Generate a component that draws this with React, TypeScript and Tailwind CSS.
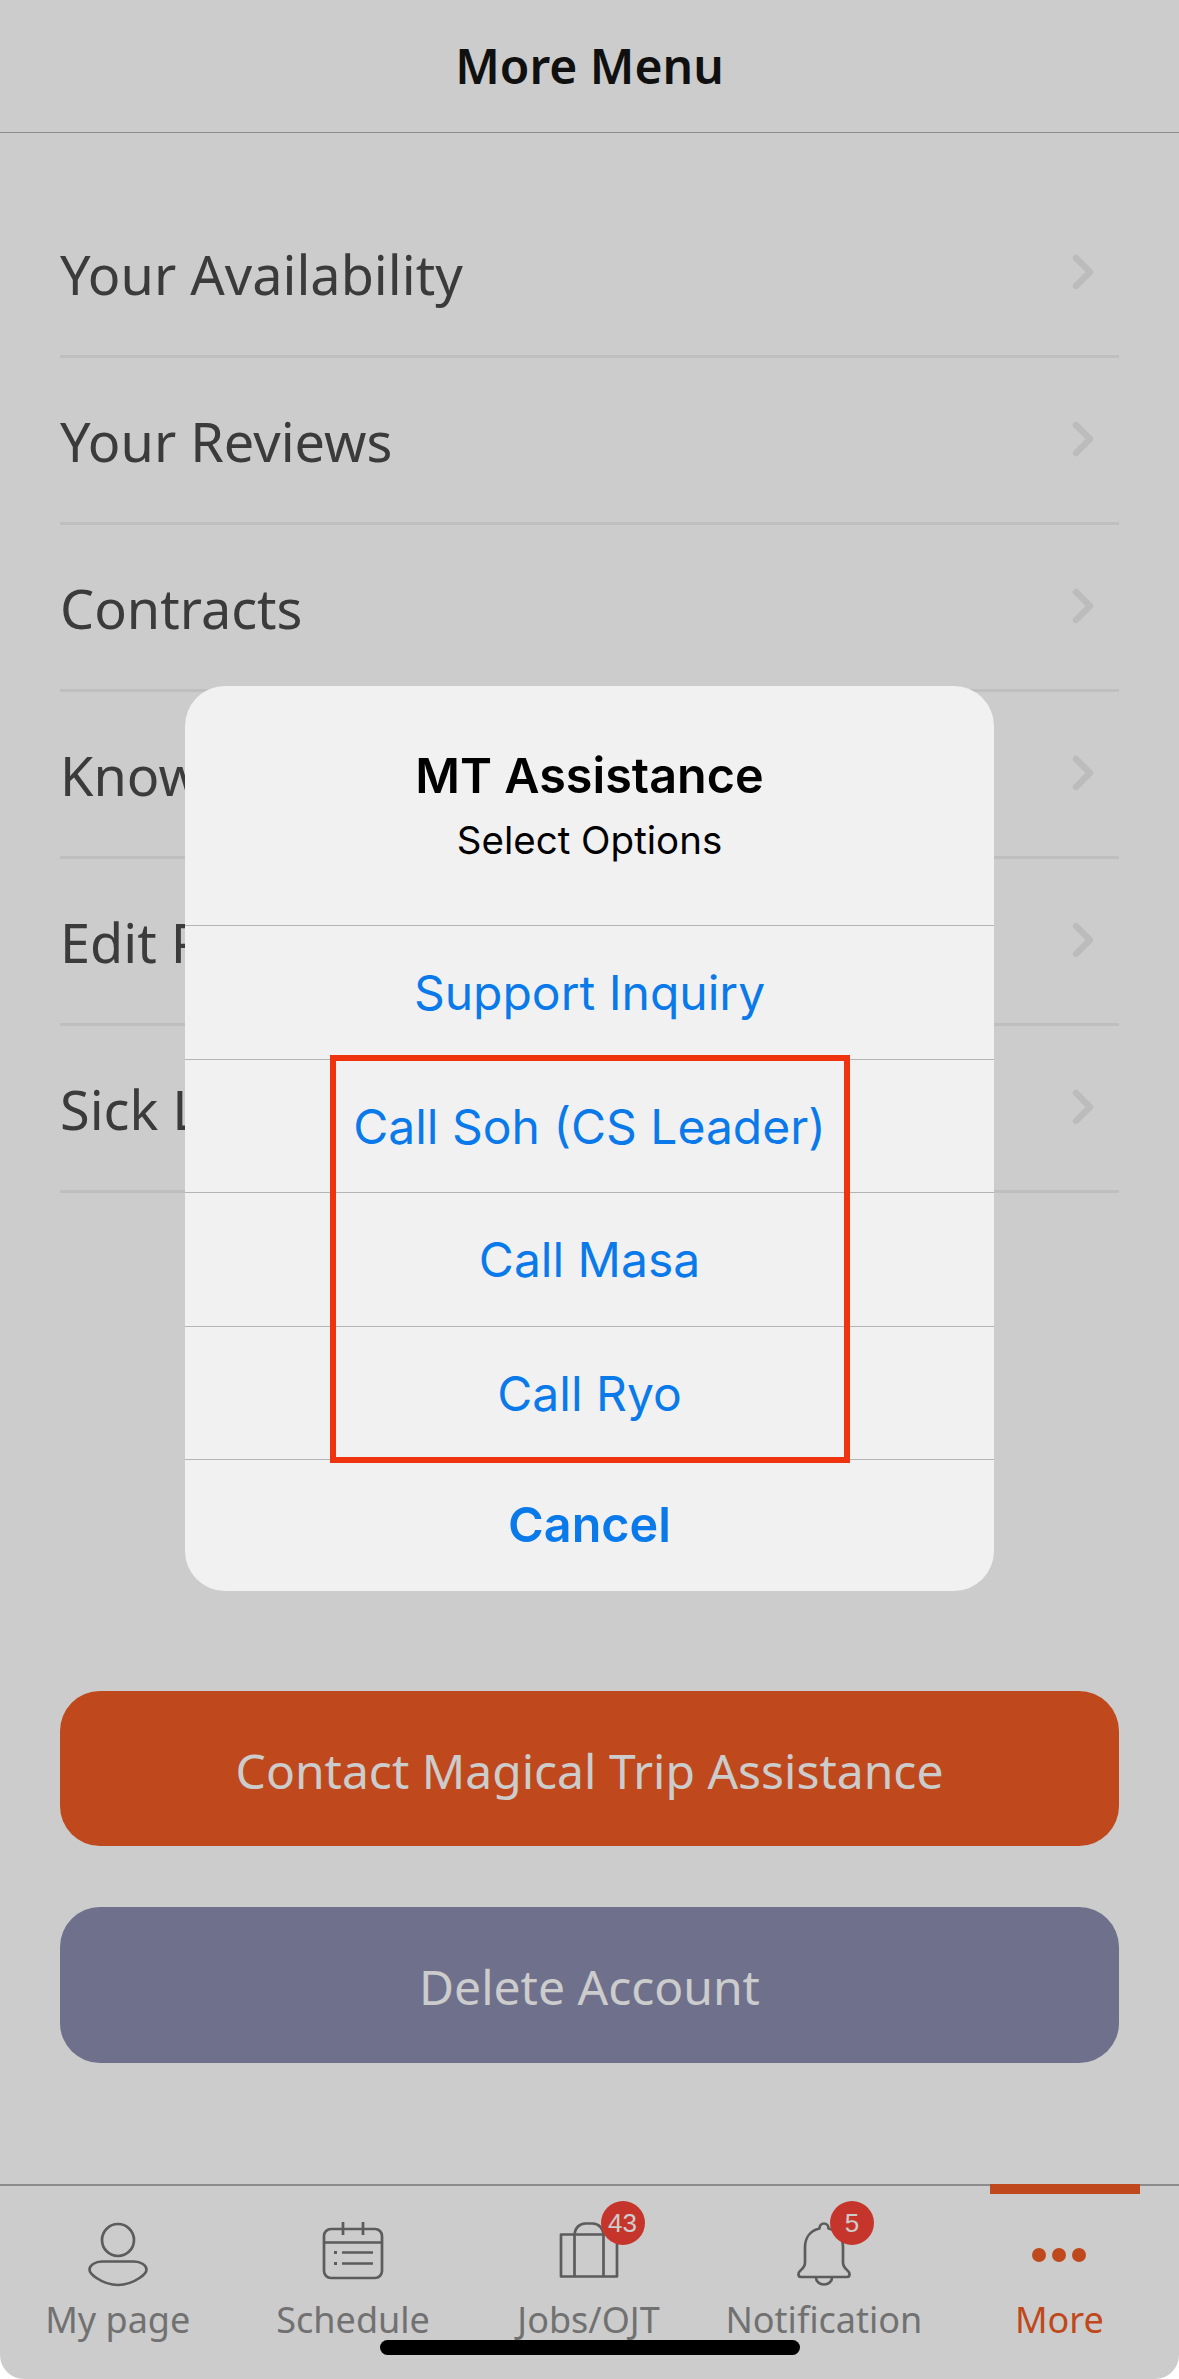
import React from 'react';

const ROWS = ['Your Availability', 'Your Reviews', 'Contracts', 'Knowledge Base', 'Edit Profile', 'Sick Leave'];

const OPTIONS = ['Support Inquiry', 'Call Soh (CS Leader)', 'Call Masa', 'Call Ryo'];

const ICON = '#737373';

function PersonIcon() {
  return (
    <svg width="60" height="66" viewBox="0 0 60 66" fill="none" stroke={ICON} strokeWidth="2.7">
      <circle cx="30" cy="18" r="16" />
      <path d="M14 39.500h32c7 0 12.500 4 12.500 8 0 3-2.500 5.500-7 8.500-6 4-13 7-21.500 7S14.500 60 8.500 56c-4.500-3-7-5.500-7-8.500 0-4 5.500-8 12.500-8z" />
    </svg>
  );
}

function CalendarIcon() {
  return (
    <svg width="62" height="58" viewBox="0 0 62 58" fill="none" stroke={ICON} strokeWidth="2.7">
      <rect x="2" y="7" width="58" height="49" rx="7" />
      <path d="M2 20.500h58M21 0v13M41 0v13" />
      <path d="M20 30.500h31M20 41.500h31" />
      <path d="M12 30.500h3M12 41.500h3" strokeWidth="3" />
    </svg>
  );
}

function BagIcon() {
  return (
    <svg width="60" height="56" viewBox="0 0 60 56" fill="none" stroke={ICON} strokeWidth="2.7">
      <path d="M2 12.500h56V54.500H2z" strokeLinejoin="round" />
      <path d="M15.500 54.500V14c0-8 5-12.500 11-12.500h7c6 0 11 4.500 11 12.500v40.500" />
    </svg>
  );
}

function BellIcon() {
  return (
    <svg width="54" height="64" viewBox="0 0 54 64" fill="none" stroke={ICON} strokeWidth="2.7" strokeLinejoin="round">
      <path d="M27 1.500c-2.500 0-4.500 2-4.500 5-9 2-14.500 9-14.500 19v15c0 4-2 6-4.500 8-1.500 1.200-2 2.500-2 4 0 1.500 1 2.500 2.500 2.500h46c1.500 0 2.500-1 2.500-2.500 0-1.500-.5-2.800-2-4-2.500-2-4.500-4-4.500-8v-15c0-10-5.500-17-14.500-19 0-3-2-5-4.500-5z" />
      <path d="M19 55.500c0 4 3.500 7 8 7s8-3 8-7" />
    </svg>
  );
}

function Badge({ value, className }: { value: string; className: string }) {
  return (
    <span className={`absolute -top-[21px] flex h-[44px] w-[44px] items-center justify-center rounded-full bg-[#f84336] text-[26px] text-white font-['Liberation_Sans',sans-serif] ${className}`}>
      {value}
    </span>
  );
}

function Tab({ label, children }: { label: string; children: React.ReactNode }) {
  return (
    <div className="flex flex-1 flex-col items-center">
      <div className="relative mt-[36px] flex h-[66px] items-start justify-center">{children}</div>
      <span className="mt-[5px] text-[36px] text-[#8e8e8e]">{label}</span>
    </div>
  );
}

export default function App() {
  return (
    <div className="relative flex h-[2379px] w-[1179px] flex-col overflow-hidden rounded-b-[24px] bg-white font-['Noto_Sans',sans-serif]">
      {/* Page behind the dialog */}
      <header className="flex h-[133px] items-center justify-center border-b border-[#b0b0b0]">
        <h1 className="text-[48px] font-semibold text-[#151515]">More Menu</h1>
      </header>

      <ul className="mx-[60px] mt-[58px] flex flex-col">
        {ROWS.map((row) => (
          <li key={row} className="flex h-[167px] items-center justify-between border-b-[3px] border-[#efefef] pr-[25px]">
            <span className="mt-[3px] text-[54px] text-[#4a4a4a]">{row}</span>
            <svg width="22" height="36" viewBox="0 0 22 36" fill="none" stroke="#ececec" strokeWidth="6.500" strokeLinecap="round" strokeLinejoin="round" className="mb-[3px]">
              <path d="M4 4l14 14L4 32" />
            </svg>
          </li>
        ))}
      </ul>

      <div className="mx-[60px] mt-[498px] flex flex-col gap-[61px]">
        <button className="h-[155px] rounded-[40px] bg-[#ef5b23] pt-[4px] text-[48px] text-white">Contact Magical Trip Assistance</button>
        <button className="h-[156px] rounded-[40px] bg-[#8a8db0] pt-[4px] text-[48px] text-white">Delete Account</button>
      </div>

      <nav className="mt-auto h-[195px] border-t-2 border-[#b0b0b0]">
        <div className="flex h-full pr-[2px]">
          <Tab label="My page"><PersonIcon /></Tab>
          <Tab label="Schedule"><CalendarIcon /></Tab>
          <Tab label="Jobs/OJT"><BagIcon /><Badge value="43" className="left-[42px]" /></Tab>
          <Tab label="Notification"><BellIcon /><Badge value="5" className="left-[33px]" /></Tab>
          <div className="relative flex flex-1 flex-col items-center">
            <span className="absolute left-[48px] -top-[2px] h-[10px] w-[150px] bg-[#ef5b23]" />
            <div className="mt-[36px] flex h-[66px] items-center gap-[6px]">
              <span className="h-[14px] w-[14px] rounded-full bg-[#ef5b23]" />
              <span className="h-[14px] w-[14px] rounded-full bg-[#ef5b23]" />
              <span className="h-[14px] w-[14px] rounded-full bg-[#ef5b23]" />
            </div>
            <span className="mt-[5px] text-[36px] text-[#ef5b23]">More</span>
          </div>
        </div>
      </nav>

      {/* Dim layer */}
      <div className="absolute inset-0 bg-black/20" />

      {/* Alert dialog */}
      <div className="absolute left-[185px] top-[686px] w-[809px] overflow-hidden rounded-[40px] bg-[#f1f1f1] font-['Inter',sans-serif]">
        <div className="flex h-[239px] flex-col items-center pt-[61px]">
          <h2 className="text-[48.500px] leading-[58px] font-semibold text-black">MT Assistance</h2>
          <p className="mt-[13px] text-[38.500px] leading-[44px] text-black">Select Options</p>
        </div>
        {OPTIONS.map((option) => (
          <div key={option} className="flex h-[133.500px] items-center justify-center border-t border-[#b4b4b4] pt-[2px] text-[48px] text-[#0a7aeb]">
            {option}
          </div>
        ))}
        <div className="flex h-[132px] items-center justify-center border-t border-[#b4b4b4] text-[48.500px] font-semibold text-[#0a7aeb]">
          Cancel
        </div>
      </div>

      {/* Annotation over the call options */}
      <div className="absolute left-[330px] top-[1055px] h-[408px] w-[520px] border-[6px] border-[#f0330f]" />

      {/* Home indicator */}
      <div className="absolute left-[380px] top-[2340px] h-[15px] w-[420px] rounded-full bg-black" />
    </div>
  );
}
